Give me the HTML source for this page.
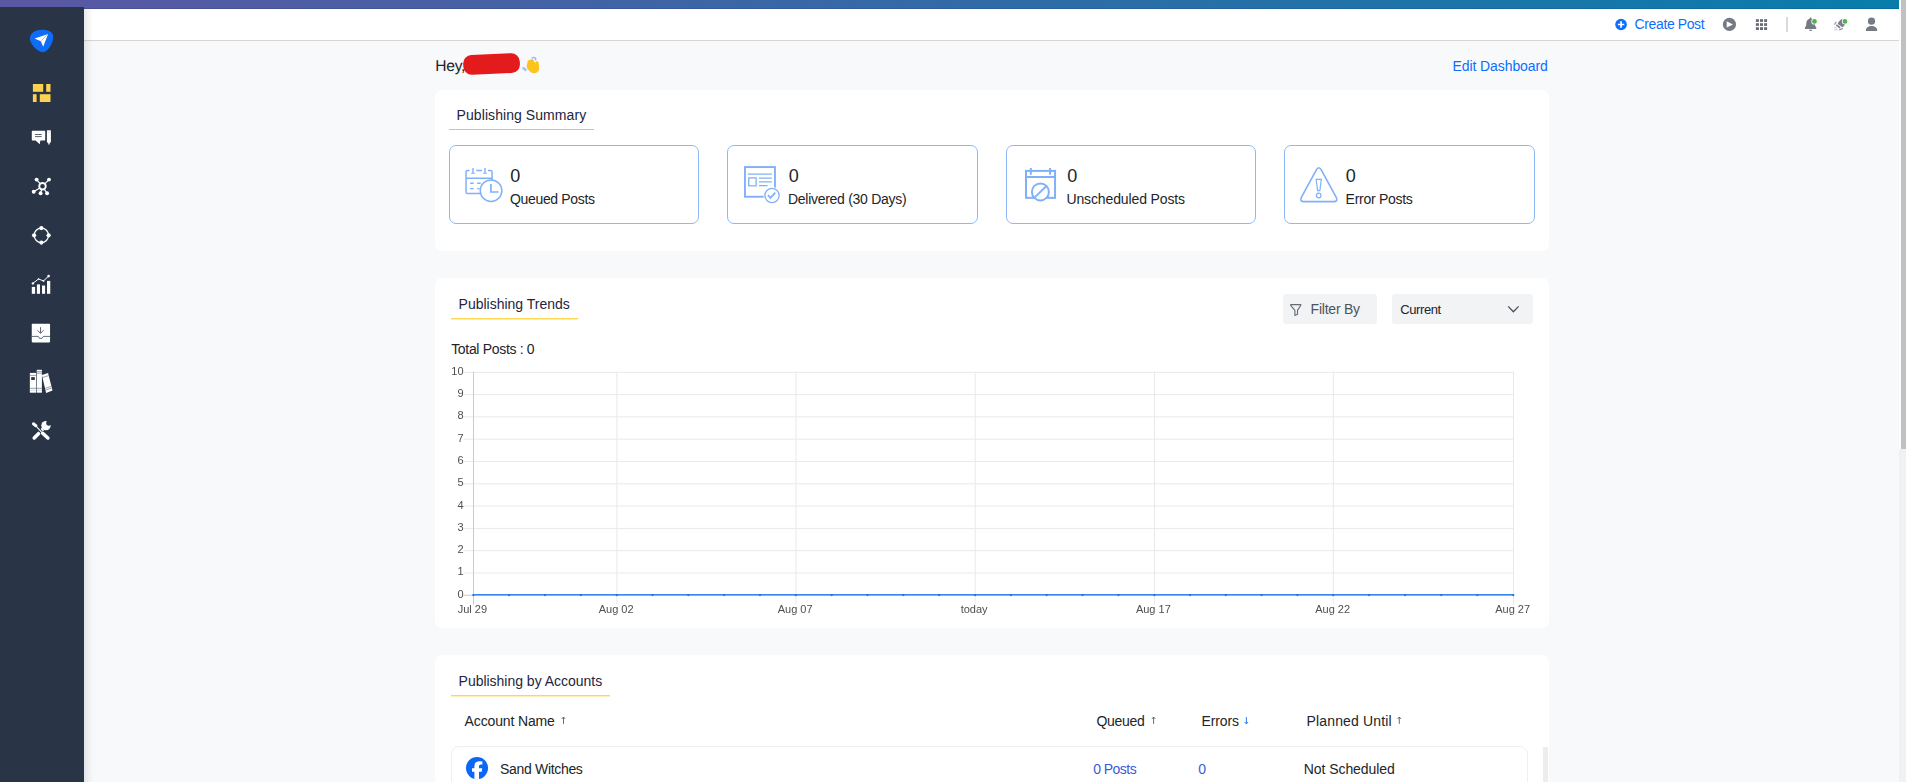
<!DOCTYPE html>
<html lang="en">
<head>
<meta charset="utf-8">
<title>Dashboard</title>
<style>
*{box-sizing:border-box;margin:0;padding:0}
html,body{width:1906px;height:782px;overflow:hidden}
body{position:relative;background:#f8f9fb;font-family:"Liberation Sans",sans-serif;color:#212529;font-size:14px}
.abs{position:absolute}
.t{position:absolute;white-space:nowrap;line-height:1;display:block}
.strip{position:absolute;left:0;top:0;width:1906px;height:9px;background:linear-gradient(90deg,#5b57a3 0%,#087daa 100%);box-shadow:inset 0 -1px 0 rgba(0,0,60,.12)}
.sidebar{position:absolute;left:0;top:7px;width:84px;height:775px;background:#293547}
.sideshadow{position:absolute;left:84px;top:9px;width:10px;height:773px;background:linear-gradient(90deg,rgba(0,0,0,.085),rgba(0,0,0,.05) 35%,rgba(0,0,0,.012) 75%,rgba(0,0,0,0));pointer-events:none}
.topnav{position:absolute;left:84px;top:9px;width:1815px;height:32px;background:#fff;border-bottom:1px solid #d6d6d7}
.sbtrack{position:absolute;left:1899px;top:0;width:7px;height:782px;background:#f1f1f1}
.sbthumb{position:absolute;left:1901px;top:0;width:5px;height:449px;background:#c1c1c1}
.sbgap{position:absolute;left:1899px;top:0;width:2px;height:449px;background:#fcfcfc}
.panel{position:absolute;left:435px;width:1114px;background:#fff;border-radius:7px}
.ttl{position:absolute;height:2px;background:linear-gradient(#ffd650 0,#ffd650 50%,rgba(255,214,80,.42) 50%,rgba(255,214,80,.42) 100%)}
.card{position:absolute;top:145px;width:250px;height:79px;border:1px solid #8dbaf6;border-radius:7px;background:#fff}
h2.t{color:#23253c}
.blue{color:#0d6efd}
.lnk{color:#3a5bd9}
.btn{position:absolute;top:294px;height:30px;background:#f1f3f5;border-radius:3px}
svg{position:absolute;overflow:visible}
.cl{font-size:11px;color:#4f4f52}
.gs{position:absolute;left:0;top:0;will-change:transform}
.rowcard{position:absolute;left:451px;top:746px;width:1077px;height:60px;border:1px solid #edeff2;border-radius:8px;background:#fff}
</style>
</head>
<body>
<div class="strip"></div>
<aside class="sidebar" id="sidebar"><div class="abs" style="left:0;top:-7px">
<svg style="left:28px;top:28px" width="28" height="26" viewBox="28 28 28 26"><path d="M43 52.2C40.5 52.2 36 49.6 33.2 46C31 43 29.9 40.8 29.9 38.6C29.9 33 35.5 29.7 42.5 29.7C48.5 29.7 53.2 31.8 53.2 36.8C53.2 41 51.2 45.5 48.7 48.6C46.9 50.8 45 52.2 43 52.2Z" fill="#0f6cf6"/><path d="M48.1 33.9L34.6 38.5L40.8 41.2L43.2 46.7Z" fill="#fff"/><path d="M47.6 34.4L40.8 41.2" stroke="#4f93f8" stroke-width=".5" fill="none"/></svg>
<svg style="left:32px;top:83px" width="20" height="20" viewBox="32 83 20 20" fill="#fdd24e"><rect x="32.9" y="84" width="10.3" height="7.8"/><rect x="46.2" y="84" width="4.3" height="7.8"/><rect x="32.9" y="94.2" width="3.7" height="7.8"/><rect x="39.8" y="94.2" width="10.7" height="7.8"/></svg>
<svg style="left:30px;top:128px" width="24" height="20" viewBox="30 128 24 20"><path d="M32.4 130.8H44.6Q45.2 130.8 45.2 131.4V139.8Q45.2 140.4 44.6 140.4H40.4L39.7 144.3L35.6 140.4H32.4Q31.8 140.4 31.8 139.8V131.4Q31.8 130.8 32.4 130.8Z" fill="#fff"/><path d="M35 134.5H41.7M35 136.6H41.7" stroke="#4b5361" stroke-width=".9"/><path d="M46.9 130.7Q46.9 130.2 47.4 130.2H50.4Q50.9 130.2 50.9 130.7V141.4L48.9 144.9L46.9 141.4Z" fill="#fff"/><path d="M46.9 132H50.9" stroke="#c9ccd2" stroke-width=".5"/><path d="M48.2 143.6L48.9 144.9L49.6 143.6Z" fill="#7d8490"/></svg>
<svg style="left:30px;top:176px" width="24" height="20" viewBox="30 176 24 20"><g stroke="#fff" stroke-width="1.2" fill="none"><path d="M36.6 179.6L40.3 183.8M49 179.6L44.8 183.9M33.7 191.7L39.8 188M40.6 193.3L41.6 189.3M47.1 193.3L44.2 189"/><circle cx="42.5" cy="186.2" r="3.25" stroke-width="1.9"/></g><g fill="#fff"><circle cx="36.6" cy="179.6" r="1.95"/><circle cx="49" cy="179.6" r="1.95"/><circle cx="33.7" cy="191.7" r="1.95"/><circle cx="40.6" cy="193.3" r="1.95"/><circle cx="47.1" cy="193.3" r="1.95"/></g></svg>
<svg style="left:30px;top:225px" width="24" height="22" viewBox="30 225 24 22"><circle cx="41.35" cy="235.35" r="7.2" stroke="#fff" stroke-width="1.3" fill="none"/><g fill="#fff"><circle cx="41.35" cy="228.1" r="2.1"/><circle cx="41.35" cy="242.6" r="2.1"/><circle cx="34.1" cy="235.35" r="2.1"/><circle cx="48.6" cy="235.35" r="2.1"/></g></svg>
<svg style="left:30px;top:274px" width="24" height="22" viewBox="30 274 24 22"><g fill="#fff"><rect x="31.8" y="286.9" width="3.3" height="6.9"/><rect x="36.9" y="284.4" width="3.1" height="9.4"/><rect x="42" y="285.5" width="3.1" height="8.3"/><rect x="47" y="280.9" width="3.25" height="12.9"/><circle cx="32.9" cy="283.4" r="1.2"/><circle cx="48.6" cy="276.1" r="1.3"/><circle cx="38.5" cy="279" r=".8"/><circle cx="43.5" cy="280.9" r=".9"/></g><path d="M32.9 283.4L38.5 279L43.5 280.9L48.6 276.1" stroke="#fff" stroke-width="1" fill="none"/></svg>
<svg style="left:30px;top:322px" width="24" height="22" viewBox="30 322 24 22"><rect x="31.75" y="323.8" width="18.3" height="18.6" rx=".8" fill="#fff"/><path d="M40.5 327.2V333M37.4 330.3L40.5 333.3L43.7 330.3M31.8 336.4H38.3L39.4 338.3H42.1L43.3 336.4H50" stroke="#3d4656" stroke-width=".8" fill="none"/></svg>
<svg style="left:28px;top:368px" width="26" height="26" viewBox="28 368 26 26"><g fill="#fff"><rect x="29.85" y="372.9" width="6.3" height="19.8"/><rect x="36.75" y="369.8" width="5.15" height="22.9"/><path d="M41.9 375L48.05 372.9L52.5 390.6L46.1 392.9Z"/></g><g stroke="#4a5363" stroke-width=".55" fill="none"><path d="M29.85 375.4H36.15M29.85 388.3H36.15M36.75 371.6H41.9M36.75 373.2H41.9M36.75 388.3H41.9M42.6 377.6L48.7 375.5M45.2 388.4L51.3 386.3M45.6 390.1L51.7 388"/></g><rect x="31.2" y="377.1" width="3.6" height="2.9" fill="#2f394b"/><path d="M29.85 390.3H36.15M36.75 390.3H41.9" stroke="#b9bec7" stroke-width=".5"/></svg>
<svg style="left:30px;top:418px" width="24" height="24" viewBox="30 418 24 24"><g stroke="#fff" stroke-linecap="round" fill="none"><path d="M34.2 437.9L38.7 433.4" stroke-width="3.5"/><path d="M40.8 431.2L43 429" stroke-width="3.2" stroke-linecap="butt"/></g><circle cx="46" cy="425.6" r="4.7" fill="#fff"/><circle cx="48.9" cy="423" r="2.7" fill="#293547"/><path d="M47.5 418L53 418L53 424.6L50.9 424.3L49 421.6L46.9 420.9Z" fill="#293547"/><path d="M33 423L43.4 434.2" stroke="#293547" stroke-width="2.9" fill="none"/><g stroke="#fff" stroke-linecap="round" fill="none"><path d="M35.2 425.2L42.2 432.8" stroke-width="1.1"/><path d="M33.4 423.8L35.9 425.7" stroke-width="3"/><path d="M42.7 433.3L47.9 438" stroke-width="3.5"/></g></svg>
</div></aside>
<header class="topnav" id="topnav"><div class="abs" style="left:-84px;top:-9px">
<svg style="left:1614px;top:18px" width="14" height="14" viewBox="1614 18 14 14"><circle cx="1621.05" cy="24.5" r="5.8" fill="#0d6efd"/><path d="M1621.05 21.3V27.7M1617.85 24.5H1624.25" stroke="#fff" stroke-width="1.7"/></svg>
<a class="t blue" id="tx-create" style="left:1634.6px;top:17.3px;font-size:14px;letter-spacing:-.39px">Create Post</a>
<svg style="left:1721px;top:16px" width="17" height="17" viewBox="1721 16 17 17"><circle cx="1729.45" cy="24.4" r="6.6" fill="#757a84"/><path d="M1726.7 21.2V27.5L1733 24.4Z" fill="#fff"/></svg>
<svg style="left:1754px;top:18px" width="15" height="14" viewBox="1754 18 15 14" fill="#646b75"><rect x="1755.9" y="19.2" width="3" height="2.7"/><rect x="1760" y="19.2" width="3" height="2.7"/><rect x="1764.1" y="19.2" width="3" height="2.7"/><rect x="1755.9" y="23.2" width="3" height="2.7"/><rect x="1760" y="23.2" width="3" height="2.7"/><rect x="1764.1" y="23.2" width="3" height="2.7"/><rect x="1755.9" y="27.2" width="3" height="2.8"/><rect x="1760" y="27.2" width="3" height="2.8"/><rect x="1764.1" y="27.2" width="3" height="2.8"/></svg>
<div class="abs" style="left:1786px;top:17px;width:1.7px;height:15px;background:#d9dadc"></div>
<svg style="left:1803px;top:16px" width="16" height="17" viewBox="1803 16 16 17"><path d="M1810.6 17.6C1811.2 17.6 1811.6 18 1811.6 18.7C1814 19.3 1814.9 21.3 1814.9 23.6C1814.9 25.6 1815.4 26.6 1816.2 27.4C1816.6 27.8 1816.5 29 1815.7 29H1805.5C1804.7 29 1804.6 27.8 1805 27.4C1805.8 26.6 1806.3 25.6 1806.3 23.6C1806.3 21.3 1807.2 19.3 1809.6 18.7C1809.6 18 1810 17.6 1810.6 17.6Z" fill="#757a84"/><path d="M1809.1 29.7H1812.1C1812.1 30.5 1811.4 31 1810.6 31C1809.8 31 1809.1 30.5 1809.1 29.7Z" fill="#757a84"/><circle cx="1814.45" cy="21.4" r="3.15" fill="#fff"/><circle cx="1814.45" cy="21.4" r="2.4" fill="#4cb54f"/></svg>
<svg style="left:1832px;top:16px" width="17" height="17" viewBox="1832 16 17 17"><path d="M1842 18.9C1839.6 20.2 1837.9 22.4 1837.7 24L1842.5 27.3C1844 26.6 1845.6 24.3 1846.3 21.6Z" fill="#7b808a"/><path d="M1836.3 24.9L1840.1 27.7" stroke="#7b808a" stroke-width="1.7" fill="none"/><path d="M1836.3 21.8L1834.4 24.6" stroke="#9fa4ac" stroke-width="1.3" fill="none"/><path d="M1839.2 30L1842.8 28.4" stroke="#8a8f98" stroke-width="1.3" fill="none"/><path d="M1834.2 27.2L1836.8 28.2M1834.4 29.7H1837.6" stroke="#c3c9d2" stroke-width="1" fill="none"/><circle cx="1845" cy="21.4" r="3.05" fill="#fff"/><circle cx="1845" cy="21.4" r="2.3" fill="#4cb54f"/></svg>
<svg style="left:1864px;top:16px" width="15" height="16" viewBox="1864 16 15 16" fill="#757a84"><circle cx="1871.5" cy="21.2" r="3.6"/><path d="M1865.9 30.9V30.2C1865.9 27.5 1868.2 25.9 1871.5 25.9C1874.8 25.9 1877.2 27.5 1877.2 30.2V30.9Z"/></svg>
</div></header>
<div class="sideshadow"></div>
<main id="main">
<h1 class="t" id="tx-hey" style="left:435.3px;top:58.6px;font-size:15.6px;font-weight:normal;letter-spacing:-.25px;text-rendering:geometricPrecision">Hey,</h1>
<svg style="left:460px;top:50px" width="84" height="28" viewBox="460 50 84 28"><rect x="463.2" y="54.1" width="56.7" height="19.8" rx="8.6" transform="rotate(-2.6 491.5 64)" fill="#e41b1d"/><path d="M528 60.6L530 59.8L532.6 59.1Q533.6 59.4 534 61.2L535.5 63Q535.8 61.2 536.8 60.9Q538 60.9 538.4 61.8L538.9 65.3L539.1 69.3Q538.8 71.3 537.3 72.3Q535.8 73.3 534 73.3Q532 73.1 530.6 71.9Q528.8 70.5 527.6 69Q526.6 67.6 526.6 66.4Q526.7 64.6 527.3 63.3Q527.4 61.6 528 60.6Z" fill="#fcc41c"/><path d="M531.7 58.2Q533.7 56.7 535.4 58Q536.2 59.1 535.3 60.3" stroke="#8fbcf8" stroke-width="1.5" fill="none"/><path d="M522.6 67.5L526.3 70.5" stroke="#9cc4f9" stroke-width="2.4" fill="none"/></svg>
<a class="t blue" id="tx-edit" style="left:1452.6px;top:59.2px;font-size:14px;letter-spacing:-.1px">Edit Dashboard</a>
<section class="panel" id="p1" style="top:90px;height:161px"><div class="abs" style="left:-435px;top:-90px">
<h2 class="t" id="tx-ps" style="left:456.6px;top:108px;font-size:14px;font-weight:normal;letter-spacing:.07px">Publishing Summary</h2>
<div class="ttl" style="left:449px;top:129px;width:145px;height:1px;background:#ffc61a"></div>
<div class="card" style="left:449px;width:250px"></div>
<div class="card" style="left:727px;width:251px"></div>
<div class="card" style="left:1006px;width:250px"></div>
<div class="card" style="left:1284px;width:251px"></div>
<svg style="left:463px;top:166px" width="42" height="38" viewBox="463 166 42 38"><g stroke="#80b1f8" fill="none" stroke-width="1.5"><path d="M469.5 170.6H467.6Q466.05 170.6 466.05 172.1V191.9Q466.05 193.4 467.6 193.4H482M476.2 170.6H482M488 170.6H490.6Q492.1 170.6 492.1 172.1V180M466 178.2H492.1"/><path d="M473 168V173.2M485 168V173.2" stroke-width="1.4"/><path d="M471.1 173.3H474.9M483.1 173.3H486.9" stroke-width="1.1"/><path d="M470.1 183.2H473.7M477.2 183.2H480.7M470.1 188.6H473.7M477.2 188.6H479.6" stroke-width="1.4"/><circle cx="491.05" cy="190.7" r="10.8" fill="#fff"/><path d="M490.9 184V192H498.6" stroke-width="1.7"/></g></svg>
<svg style="left:742px;top:164px" width="42" height="42" viewBox="742 164 42 42"><g stroke="#80b1f8" fill="none"><rect x="744.95" y="167.05" width="30" height="29.7" stroke-width="1.9"/><path d="M747.8 174.2H771.8M759 178.1H771.8M759 181.9H771.8M759 185.6H767.6" stroke-width="1.3"/><rect x="748.75" y="177.9" width="7.4" height="7.9" stroke-width="1.3"/><circle cx="772" cy="195.5" r="8.2" fill="#fff" stroke="#fff" stroke-width=".6"/><circle cx="772" cy="195.5" r="7.15" stroke-width="1.3"/><path d="M768 195.1L770.5 197.9L775.3 192.6" stroke-width="1.7"/></g></svg>
<svg style="left:1022px;top:166px" width="38" height="38" viewBox="1022 166 38 38"><g stroke="#80b1f8" fill="none" stroke-width="2"><rect x="1026" y="170.9" width="29.05" height="26.95"/><path d="M1026 177.1H1055M1030.8 168V174.7M1050.1 168V174.7"/><circle cx="1040.4" cy="191.9" r="8.5" fill="#fff"/><path d="M1034.4 197.6L1046.5 186"/></g></svg>
<svg style="left:1298px;top:164px" width="42" height="42" viewBox="1298 164 42 42"><g stroke="#80b1f8" fill="none"><path d="M1316.2 170.2Q1318.8 165.4 1321.4 170.2L1336.1 197.2Q1338.4 201.6 1333.6 201.6H1304Q1299.2 201.6 1301.5 197.2Z" stroke-width="1.6" stroke-linejoin="round"/><path d="M1316.1 179.3H1321.3L1319.9 190.6H1317.6Z" stroke-width="1.2"/><circle cx="1318.7" cy="195.5" r="2.3" stroke-width="1.2"/></g></svg>
<span class="t" id="tx-n1" style="left:510.3px;top:166.8px;font-size:18px">0</span>
<span class="t" id="tx-n2" style="left:788.8px;top:166.8px;font-size:18px">0</span>
<span class="t" id="tx-n3" style="left:1067.3px;top:166.8px;font-size:18px">0</span>
<span class="t" id="tx-n4" style="left:1345.8px;top:166.8px;font-size:18px">0</span>
<span class="t" id="tx-l1" style="left:510px;top:192.2px;font-size:14px;letter-spacing:-.34px">Queued Posts</span>
<span class="t" id="tx-l2" style="left:788px;top:192.2px;font-size:14px;letter-spacing:-.28px">Delivered (30 Days)</span>
<span class="t" id="tx-l3" style="left:1066.4px;top:192.2px;font-size:14px;letter-spacing:-.12px">Unscheduled Posts</span>
<span class="t" id="tx-l4" style="left:1345.6px;top:192.2px;font-size:14px;letter-spacing:-.28px">Error Posts</span>
</div></section>
<section class="panel" id="p2" style="top:278px;height:349.5px"><div class="abs" style="left:-435px;top:-278px">
<h2 class="t" id="tx-pt" style="left:458.6px;top:297.1px;font-size:14px;font-weight:normal;letter-spacing:-.01px">Publishing Trends</h2>
<div class="ttl" style="left:451px;top:318px;width:127px"></div>
<div class="btn" style="left:1283px;width:94px"></div>
<svg style="left:1288px;top:302px" width="16" height="16" viewBox="1288 302 16 16"><path d="M1291 304.6H1300.5Q1301.2 304.6 1300.8 305.3L1297.5 310.4V314.2L1294.9 315.4V310.4L1290.7 305.3Q1290.3 304.6 1291 304.6Z" stroke="#666c75" stroke-width="1.1" fill="none" stroke-linejoin="round"/></svg>
<span class="t" id="tx-fb" style="left:1310.6px;top:302.2px;font-size:14px;letter-spacing:-.23px;color:#4d545d">Filter By</span>
<div class="btn" style="left:1392px;width:141px"></div>
<span class="t" id="tx-cur" style="left:1400.2px;top:303px;font-size:13px;letter-spacing:-.39px;color:#22252f">Current</span>
<svg style="left:1506px;top:304px" width="14" height="10" viewBox="1506 304 14 10"><path d="M1508.2 306.4L1513.4 311.8L1518.6 306.4" stroke="#4a4f57" stroke-width="1.3" fill="none"/></svg>
<span class="t" id="tx-tp" style="left:451.2px;top:342px;font-size:14px;letter-spacing:-.32px">Total Posts : 0</span>
<svg style="left:440px;top:362px" width="1100" height="260" viewBox="440 362 1100 260"><path d="M463.5 372.30H1513.5M463.5 394.60H1513.5M463.5 416.90H1513.5M463.5 439.20H1513.5M463.5 461.50H1513.5M463.5 483.80H1513.5M463.5 506.10H1513.5M463.5 528.40H1513.5M463.5 550.70H1513.5M463.5 573.00H1513.5M616.90 371.8V604.5M796.00 371.8V604.5M975.20 371.8V604.5M1154.50 371.8V604.5M1333.30 371.8V604.5M1513.50 371.8V604.5" stroke="#e8e9eb" stroke-width="1" fill="none"/><path d="M473.5 371.8V604.5M463.5 595.3H1513.5" stroke="#cbcbce" stroke-width="1" fill="none"/><path d="M473.5 594.8H1513.9" stroke="#3b86f0" stroke-width="1.6" fill="none"/><g fill="#1f70ee"><circle cx="473.30" cy="595.1" r="1.15"/><circle cx="509.15" cy="595.1" r="1.15"/><circle cx="545.00" cy="595.1" r="1.15"/><circle cx="580.85" cy="595.1" r="1.15"/><circle cx="616.70" cy="595.1" r="1.15"/><circle cx="652.52" cy="595.1" r="1.15"/><circle cx="688.34" cy="595.1" r="1.15"/><circle cx="724.16" cy="595.1" r="1.15"/><circle cx="759.98" cy="595.1" r="1.15"/><circle cx="795.80" cy="595.1" r="1.15"/><circle cx="831.64" cy="595.1" r="1.15"/><circle cx="867.48" cy="595.1" r="1.15"/><circle cx="903.32" cy="595.1" r="1.15"/><circle cx="939.16" cy="595.1" r="1.15"/><circle cx="975.00" cy="595.1" r="1.15"/><circle cx="1010.86" cy="595.1" r="1.15"/><circle cx="1046.72" cy="595.1" r="1.15"/><circle cx="1082.58" cy="595.1" r="1.15"/><circle cx="1118.44" cy="595.1" r="1.15"/><circle cx="1154.30" cy="595.1" r="1.15"/><circle cx="1190.06" cy="595.1" r="1.15"/><circle cx="1225.82" cy="595.1" r="1.15"/><circle cx="1261.58" cy="595.1" r="1.15"/><circle cx="1297.34" cy="595.1" r="1.15"/><circle cx="1333.10" cy="595.1" r="1.15"/><circle cx="1369.14" cy="595.1" r="1.15"/><circle cx="1405.18" cy="595.1" r="1.15"/><circle cx="1441.22" cy="595.1" r="1.15"/><circle cx="1477.26" cy="595.1" r="1.15"/><circle cx="1513.30" cy="595.1" r="1.15"/></g></svg>
<div class="gs"><span class="t cl" id="tx-c1" style="left:443px;width:20.6px;text-align:right;top:365.7px">10</span><span class="t cl" id="tx-c2" style="left:443px;width:20.6px;text-align:right;top:388.0px">9</span><span class="t cl" id="tx-c3" style="left:443px;width:20.6px;text-align:right;top:410.3px">8</span><span class="t cl" id="tx-c4" style="left:443px;width:20.6px;text-align:right;top:432.6px">7</span><span class="t cl" id="tx-c5" style="left:443px;width:20.6px;text-align:right;top:454.9px">6</span><span class="t cl" id="tx-c6" style="left:443px;width:20.6px;text-align:right;top:477.2px">5</span><span class="t cl" id="tx-c7" style="left:443px;width:20.6px;text-align:right;top:499.5px">4</span><span class="t cl" id="tx-c8" style="left:443px;width:20.6px;text-align:right;top:521.8px">3</span><span class="t cl" id="tx-c9" style="left:443px;width:20.6px;text-align:right;top:544.1px">2</span><span class="t cl" id="tx-c10" style="left:443px;width:20.6px;text-align:right;top:566.4px">1</span><span class="t cl" id="tx-c11" style="left:443px;width:20.6px;text-align:right;top:588.7px">0</span>
<span class="t cl" id="tx-c12" style="left:457.7px;top:603.7px">Jul 29</span><span class="t cl" id="tx-c13" style="left:598.7px;top:603.7px">Aug 02</span><span class="t cl" id="tx-c14" style="left:777.7px;top:603.7px">Aug 07</span><span class="t cl" id="tx-c15" style="left:960.7px;top:603.7px">today</span><span class="t cl" id="tx-c16" style="left:1135.9px;top:603.7px">Aug 17</span><span class="t cl" id="tx-c17" style="left:1315.2px;top:603.7px">Aug 22</span><span class="t cl" id="tx-c18" style="left:1495.2px;top:603.7px">Aug 27</span></div>
</div></section>
<section class="panel" id="p3" style="top:655px;height:140px"><div class="abs" style="left:-435px;top:-655px">
<h2 class="t" id="tx-pa" style="left:458.6px;top:674.2px;font-size:14px;font-weight:normal;letter-spacing:-.02px">Publishing by Accounts</h2>
<div class="ttl" style="left:451px;top:695px;width:159px"></div>
<span class="t" id="tx-an" style="left:464.6px;top:713.9px;font-size:14px;letter-spacing:-.14px">Account Name</span>
<span class="t" id="tx-q" style="left:1096.4px;top:713.9px;font-size:14px;letter-spacing:-.29px">Queued</span>
<span class="t" id="tx-e" style="left:1201.4px;top:713.9px;font-size:14px;letter-spacing:-.08px">Errors</span>
<span class="t" id="tx-pu" style="left:1306.6px;top:713.9px;font-size:14px;letter-spacing:.14px">Planned Until</span>
<svg style="left:560px;top:715px" width="8" height="10" viewBox="560 715 8 10"><path d="M563.5 723.9V717.2M561.8 718.9L563.5 717L565.2 718.9" stroke="#555b66" stroke-width=".9" fill="none"/></svg>
<svg style="left:1150px;top:715px" width="8" height="10" viewBox="1150 715 8 10"><path d="M1153.6 723.9V717.2M1151.9 718.9L1153.6 717L1155.3 718.9" stroke="#555b66" stroke-width=".9" fill="none"/></svg>
<svg style="left:1243px;top:715px" width="8" height="10" viewBox="1243 715 8 10"><path d="M1246.4 717V723.7M1244.7 722L1246.4 723.9L1248.1 722" stroke="#0d6efd" stroke-width=".9" fill="none"/></svg>
<svg style="left:1396px;top:715px" width="8" height="10" viewBox="1396 715 8 10"><path d="M1399.3 723.9V717.2M1397.6 718.9L1399.3 717L1401 718.9" stroke="#555b66" stroke-width=".9" fill="none"/></svg>
<div class="rowcard"></div>
<div class="abs" style="left:1543px;top:746.5px;width:5px;height:40px;background:#ededed"></div>
<svg style="left:464px;top:756px" width="26" height="26" viewBox="464 756 26 26"><circle cx="477" cy="768.1" r="11.05" fill="#0b68f6"/><path d="M479 779.5V771.7H481.7L482.2 768.2H479V766.2Q479 764.6 480.8 764.6H482.4V761.6Q481.2 761.3 479.7 761.3Q474.4 761.3 474.4 766V768.2H472V771.7H474.4V779.5Z" fill="#fff"/></svg>
<span class="t" id="tx-sw" style="left:500px;top:762px;font-size:14px;letter-spacing:-.32px">Sand Witches</span>
<a class="t lnk" id="tx-0p" style="left:1093.2px;top:762px;font-size:14px;letter-spacing:-.53px">0 Posts</a>
<a class="t lnk" id="tx-0" style="left:1198.2px;top:762px;font-size:14px">0</a>
<span class="t" id="tx-ns" style="left:1303.8px;top:762px;font-size:14px;letter-spacing:-.07px">Not Scheduled</span>
</div></section>
</main>
<div class="sbtrack"></div><div class="sbgap"></div><div class="sbthumb"></div>
</body>
</html>
